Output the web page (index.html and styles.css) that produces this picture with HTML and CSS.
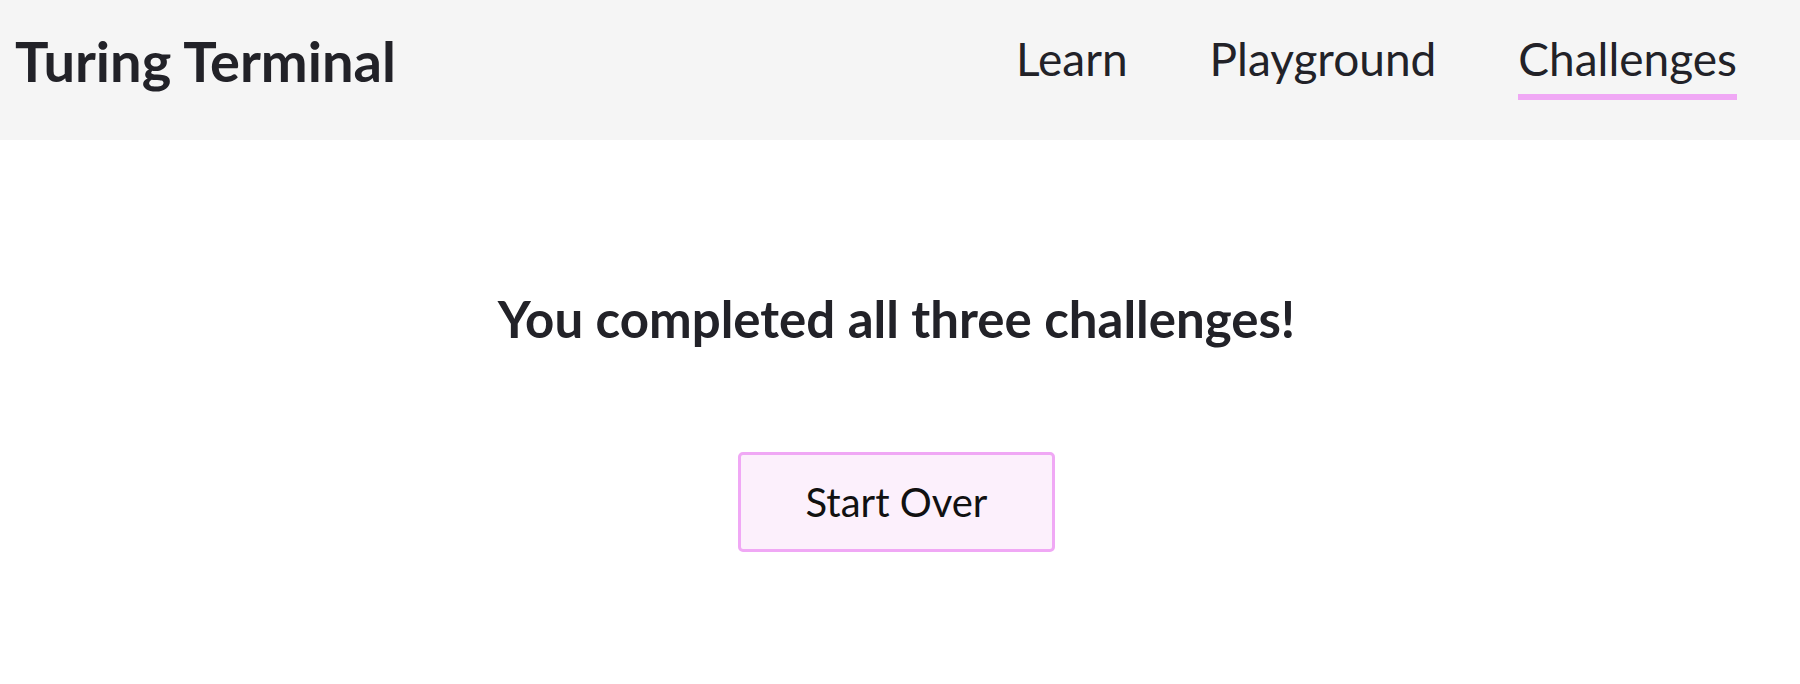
FILE: index.html
```html
<!DOCTYPE html>
<html lang="en">
<head>
<meta charset="utf-8">
<title>Turing Terminal</title>
<link rel="stylesheet" href="styles.css">
</head>
<body>
<header class="topbar">
  <div class="brand">Turing Terminal</div>
  <nav class="nav">
    <a class="nav-link" href="#">Learn</a>
    <a class="nav-link" href="#">Playground</a>
    <a class="nav-link active" href="#">Challenges</a>
  </nav>
</header>
<main class="content">
  <h1 class="done-title">You completed all three challenges!</h1>
  <button class="restart" type="button">Start Over</button>
</main>
</body>
</html>
```
FILE: styles.css
```css
html, body {
  margin: 0;
  padding: 0;
  background: #ffffff;
  font-family: Lato, "Open Sans", sans-serif;
  color: #222228;
}

.topbar {
  height: 140px;
  background: #f5f5f5;
  display: flex;
  align-items: center;
  justify-content: space-between;
  padding: 0 63px 0 15px;
  box-sizing: border-box;
}

.brand {
  font-size: 56px;
  font-weight: 700;
  line-height: 1;
  margin-bottom: 18px;
}

.nav {
  display: flex;
  gap: 82px;
  align-items: center;
  margin-bottom: 10px;
}

.nav-link {
  font-size: 46px;
  line-height: 1;
  color: #222228;
  text-decoration: none;
  padding: 6px 0 12px;
  border-bottom: 6px solid transparent;
}

.nav-link.active {
  border-bottom-color: #f0a8f5;
}

.content {
  display: flex;
  flex-direction: column;
  align-items: center;
  padding-top: 148px;
  padding-right: 7px;
}

.done-title {
  margin: 0;
  font-size: 51px;
  font-weight: 700;
  line-height: 1.2;
}

.restart {
  margin-top: 103px;
  width: 317px;
  height: 100px;
  background: #fcf0fc;
  border: 3px solid #f0a8f5;
  border-radius: 5px;
  font-family: Lato, "Open Sans", sans-serif;
  font-size: 40px;
  color: #111111;
  cursor: pointer;
}
```
